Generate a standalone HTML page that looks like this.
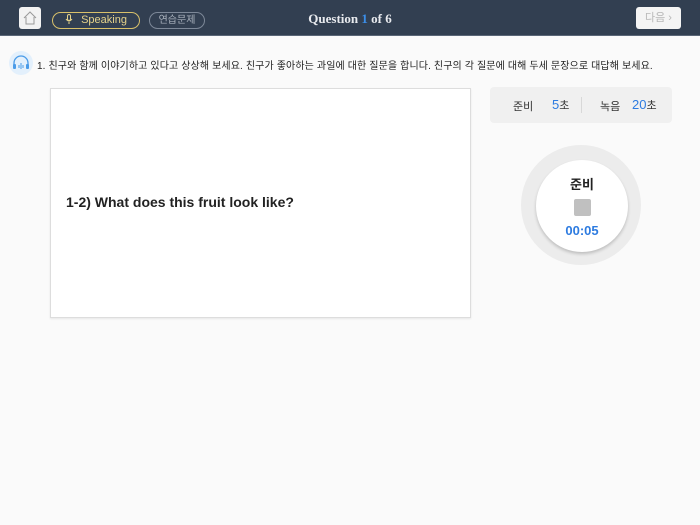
<!DOCTYPE html>
<html><head><meta charset="utf-8"><style>
*{margin:0;padding:0;box-sizing:border-box}
body{width:700px;height:525px;background:#fafafa;font-family:"Liberation Sans","Noto Sans CJK KR",sans-serif;position:relative;overflow:hidden}
.hdr{position:absolute;left:0;top:0;width:700px;height:36px;background:#323f51;border-bottom:1px solid #5a6677}
.home{position:absolute;left:19px;top:7px;width:22px;height:22px;background:#f2f2f2;border-radius:3px}
.pill{position:absolute;top:12px;height:17px;border-radius:9px;font-size:11px;line-height:15px;text-align:center}
.sp{left:52px;width:88px;border:1px solid #d8c06a;color:#e6d38a}
.pr{left:149px;width:56px;border:1px solid #7d8898;color:#aab2bd;font-size:10px}
.title{position:absolute;left:0;width:700px;top:11px;text-align:center;font-family:"Liberation Serif",serif;font-weight:bold;font-size:13px;color:#e8eaee}
.next{position:absolute;left:636px;top:7px;width:45px;height:22px;background:#f4f4f4;border-radius:3px;color:#b8b8b8;font-size:11px;line-height:22px;text-align:center}
.q{position:absolute;left:37px;top:57px;font-size:10px;color:#222;white-space:nowrap;letter-spacing:0.12px}
.hp{position:absolute;left:9px;top:51px;width:24px;height:24px;border-radius:50%;background:#e3f0fc}
.card{position:absolute;left:50px;top:88px;width:421px;height:230px;background:#fff;border:1px solid #ddd;box-shadow:0 1px 2px rgba(0,0,0,.08)}
.card div{position:absolute;left:15px;top:105px;font-weight:bold;font-size:14px;color:#222}
.box{position:absolute;left:490px;top:87px;width:182px;height:36px;background:#f0f0f0;border-radius:4px;font-size:11px;color:#333}
.box .t{position:absolute;top:11px;white-space:nowrap}
.b{color:#2d7be0;font-size:13px}
.outer{position:absolute;left:521px;top:145px;width:120px;height:120px;border-radius:50%;background:#ececec}
.inner{position:absolute;left:536px;top:160px;width:92px;height:92px;border-radius:50%;background:#fff;box-shadow:0 2px 3px rgba(0,0,0,.2);text-align:center}
</style></head><body>
<div class="hdr">
<div class="home"><svg width="22" height="22" viewBox="0 0 22 22"><path d="M5 11 L11 5 L17 11 M7 10 V17 H15 V10" fill="none" stroke="#999" stroke-width="1"/></svg></div>
<div class="pill sp"><svg width="8" height="10" viewBox="0 0 8 10" style="vertical-align:-1px;margin-right:8px"><rect x="2.5" y="0.5" width="3" height="6" rx="1.5" fill="none" stroke="#e6d38a"/><path d="M1 5 Q4 9 7 5 M4 8 V10" fill="none" stroke="#e6d38a"/></svg>Speaking</div>
<div class="pill pr">연습문제</div>
<div class="title">Question <span style="color:#3b8ee8">1</span> of 6</div>
<div class="next">다음 ›</div>
</div>
<div class="hp"><svg width="24" height="24" viewBox="0 0 24 24"><path d="M5 15 V12 A7 7 0 0 1 19 12 V15" fill="none" stroke="#4a9be8" stroke-width="1.3"/><rect x="4" y="13" width="3" height="5" rx="1" fill="#4a9be8"/><rect x="17" y="13" width="3" height="5" rx="1" fill="#4a9be8"/><path d="M10 14v3M12 12v6M14 14v3" stroke="#4a9be8"/></svg></div>
<div class="q">1. 친구와 함께 이야기하고 있다고 상상해 보세요. 친구가 좋아하는 과일에 대한 질문을 합니다. 친구의 각 질문에 대해 두세 문장으로 대답해 보세요.</div>
<div class="card"><div>1-2) What does this fruit look like?</div></div>
<div class="box"><span class="t" style="left:23px">준비</span><span class="t" style="left:62px;top:10px"><span class="b">5</span>초</span><span class="t" style="left:91px;top:10px;width:1px;height:16px;background:#d8d8d8"></span><span class="t" style="left:110px">녹음</span><span class="t" style="left:142px;top:10px"><span class="b">20</span>초</span></div>
<div class="outer"></div>
<div class="inner"><div style="margin-top:14px;font-weight:bold;font-size:13px;color:#222">준비</div><div style="width:17px;height:17px;background:#c0c0c0;border-radius:2px;margin:6px auto 0"></div><div style="margin-top:7px;font-weight:bold;font-size:13px;color:#2d7be0">00:05</div></div>
</body></html>
